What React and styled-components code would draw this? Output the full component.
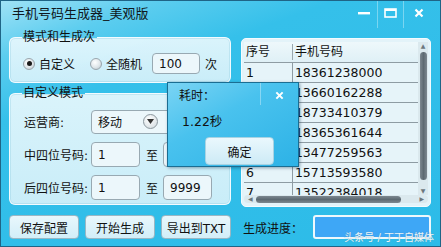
import React from "react";
import styled, { createGlobalStyle } from "styled-components";

const GlobalStyle = createGlobalStyle`
  html, body {
    margin: 0;
    padding: 0;
    background: #ffffff;
  }
  * {
    box-sizing: border-box;
  }
`;

const FONT = `"DejaVu Sans", "Noto Sans CJK SC", sans-serif`;

const Window = styled.div`
  position: relative;
  width: 441px;
  height: 247px;
  border: 1px solid #1f6486;
  background: linear-gradient(160deg, #9fe2f6 0%, #5ccdef 14%, #35c0ea 30%, #2cbbe8 100%);
  font-family: ${FONT};
  font-size: 12px;
  color: #111;
  overflow: hidden;
`;

const TitleBar = styled.div`
  display: flex;
  align-items: flex-start;
  height: 29px;
`;

const Title = styled.div`
  flex: 1;
  padding: 5px 0 0 11px;
  font-size: 13px;
  line-height: 16px;
  color: #101820;
`;

const Controls = styled.div`
  display: flex;
  height: 27px;
  margin-right: 7px;
`;

const ControlButton = styled.div`
  width: ${(p) => p.$w}px;
  height: 27px;
  display: flex;
  align-items: center;
  justify-content: center;
  border-left: ${(p) => (p.$sep ? "1px solid rgba(255,255,255,0.35)" : "none")};
  color: #ffffff;
  padding-bottom: 4px;
`;

const Main = styled.div`
  display: flex;
  gap: 10px;
  height: 179px;
  padding: 0 9px 0 8px;
`;

const LeftColumn = styled.div`
  width: 223px;
  display: flex;
  flex-direction: column;
  gap: 3px;
`;

const Group = styled.fieldset`
  margin: 0;
  padding: ${(p) => p.$pad};
  border: 1px solid #f3fbff;
  border-radius: 6px;
  background: linear-gradient(180deg, rgba(232, 248, 253, 0.92), rgba(214, 241, 250, 0.92));
  box-shadow: inset 0 0 0 1px rgba(120, 190, 215, 0.25);
`;

const Legend = styled.legend`
  padding: 0 2px 0 1px;
  margin-left: 4px;
  font-size: 12px;
  line-height: 14px;
  color: #111;
`;

const RadioRow = styled.div`
  display: flex;
  align-items: center;
  height: 21px;
  padding-left: 5px;
`;

const Radio = styled.span`
  display: inline-flex;
  align-items: center;
  justify-content: center;
  width: 12px;
  height: 12px;
  border-radius: 50%;
  border: 1px solid #9aa6ad;
  background: radial-gradient(circle at 40% 35%, #ffffff 0%, #dfe6ea 55%, #b5c0c6 100%);
  margin-right: 4px;
`;

const RadioDot = styled.span`
  width: 5px;
  height: 5px;
  border-radius: 50%;
  background: #1a1a1a;
`;

const RadioLabel = styled.span`
  margin-right: ${(p) => p.$mr}px;
  font-size: 12px;
`;

const Input = styled.div`
  display: flex;
  align-items: center;
  width: ${(p) => p.$w}px;
  height: ${(p) => p.$h || 24}px;
  padding-left: 6px;
  border: 1px solid #98a9b2;
  border-radius: 4px;
  background: #ecf7fb;
  font-size: 12px;
  color: #111;
`;

const Suffix = styled.span`
  margin-left: 5px;
  font-size: 12px;
`;

const FormRows = styled.div`
  display: flex;
  flex-direction: column;
  gap: 8px;
`;

const FormRow = styled.div`
  display: flex;
  align-items: center;
  height: 25px;
`;

const FieldLabel = styled.span`
  width: 73px;
  padding-left: 6px;
  font-size: 12px;
`;

const Select = styled.div`
  display: flex;
  align-items: center;
  justify-content: space-between;
  width: 80px;
  height: 24px;
  padding: 0 2px 0 6px;
  border: 1px solid #98a9b2;
  border-radius: 4px;
  background: #ecf7fb;
`;

const SelectArrow = styled.span`
  display: flex;
  align-items: center;
  justify-content: center;
  width: 15px;
  height: 15px;
  border-radius: 50%;
  border: 1px solid #8b979e;
  background: radial-gradient(circle at 40% 35%, #ffffff, #cfd8dd);
  margin-right: 10px;
`;

const ToText = styled.span`
  width: 23px;
  padding-left: 6px;
  font-size: 12px;
`;

const TableFrame = styled.div`
  margin-top: 8px;
  width: 191px;
  height: 169px;
  display: flex;
  flex-direction: column;
  padding: 3px 2px 3px 2px;
  border: 1px solid #f3fbff;
  border-radius: 5px;
  background: #e3f3f9;
`;

const TableBody = styled.div`
  display: flex;
  height: 153px;
`;

const Grid = styled.div`
  flex: 1;
  overflow: hidden;
`;

const HeaderRow = styled.div`
  display: grid;
  grid-template-columns: 48px 1fr;
  height: 20px;
  align-items: center;
  background: linear-gradient(180deg, #eef8fb, #dff0f6);
  font-size: 12px;
`;

const HeaderCell = styled.div`
  padding-left: 2px;
  border-left: ${(p) => (p.$sep ? "1px solid #9aa8ae" : "none")};
  height: 16px;
  line-height: 16px;
`;

const Row = styled.div`
  display: grid;
  grid-template-columns: 48px 1fr;
  height: 20px;
  border-top: 1px solid #8e9ca3;
  background: #e6f4f9;
  font-size: 12.5px;
`;

const Cell = styled.div`
  padding-left: 2px;
  line-height: 19px;
  border-left: ${(p) => (p.$sep ? "1px solid #8e9ca3" : "none")};
  white-space: nowrap;
`;

const VScroll = styled.div`
  width: 10px;
  display: flex;
  flex-direction: column;
  align-items: center;
  background: #dbe9ee;
`;

const VThumb = styled.div`
  width: 7px;
  height: 128px;
  border-radius: 4px;
  background: linear-gradient(90deg, #7c8890, #5d6a72, #7c8890);
  margin-top: 2px;
`;

const ScrollArrow = styled.div`
  font-size: 6px;
  line-height: 8px;
  color: #6c777d;
`;

const Spacer = styled.div`
  flex: 1;
`;

const HScroll = styled.div`
  display: flex;
  align-items: center;
  height: 9px;
  padding: 0 4px;
  background: #dbe9ee;
  border-radius: 4px;
`;

const HThumb = styled.div`
  height: 7px;
  width: 145px;
  border-radius: 4px;
  background: linear-gradient(180deg, #7c8890, #5d6a72, #7c8890);
  margin: 0 3px;
`;

const Footer = styled.div`
  display: flex;
  align-items: center;
  gap: 6px;
  padding: 6px 0 0 8px;
`;

const Button = styled.div`
  display: flex;
  align-items: center;
  justify-content: center;
  width: 70px;
  height: 24px;
  border: 1px solid #9ab7c4;
  border-radius: 4px;
  background: linear-gradient(180deg, #e9f7fc 0%, #d2eef8 100%);
  font-size: 12px;
  color: #111;
`;

const ProgressLabel = styled.span`
  margin-left: 6px;
  width: 64px;
  font-size: 12px;
`;

const Progress = styled.div`
  width: 118px;
  height: 24px;
  border: 2px solid #eef8fc;
  border-radius: 3px;
  background: #3ea7f6;
`;

const Dialog = styled.div`
  position: absolute;
  left: 166px;
  top: 81px;
  width: 132px;
  height: 85px;
  border: 1px solid #1b6d92;
  background: linear-gradient(150deg, #7ad4f4 0%, #49c2ee 40%, #2db2e6 100%);
  box-shadow: 1px 1px 3px rgba(0, 40, 70, 0.4);
  display: flex;
  flex-direction: column;
`;

const DialogHead = styled.div`
  display: flex;
  height: 22px;
`;

const DialogTitle = styled.div`
  flex: 1;
  padding: 6px 0 0 11px;
  font-size: 12px;
  line-height: 14px;
`;

const DialogClose = styled.div`
  width: 38px;
  display: flex;
  align-items: center;
  justify-content: center;
  border-left: 1px solid rgba(255, 255, 255, 0.35);
  color: #ffffff;
  padding-top: 3px;
`;

const DialogText = styled.div`
  padding: 10px 0 0 14px;
  font-size: 12.5px;
  line-height: 14px;
`;

const DialogButton = styled.div`
  align-self: flex-end;
  margin: 8px 24px 0 0;
  width: 69px;
  height: 28px;
  display: flex;
  align-items: center;
  justify-content: center;
  border: 1px solid #a8d3e3;
  border-radius: 4px;
  background: linear-gradient(180deg, #eaf8fd, #cdebf6);
  font-size: 12px;
`;

const Watermark = styled.div`
  position: absolute;
  right: 6px;
  bottom: 2px;
  font-size: 10px;
  line-height: 12px;
  color: #ffffff;
  text-shadow: 0 0 1px #5a8fa6;
  opacity: 0.9;
`;

const numbers = [
  "18361238000",
  "13660162288",
  "18733410379",
  "18365361644",
  "13477259563",
  "15713593580",
  "13522384018",
];

const XIcon = ({ size = 9 }) => (
  <svg width={size} height={size} viewBox="0 0 10 10">
    <path d="M1.5 1.5 L8.5 8.5 M8.5 1.5 L1.5 8.5" stroke="#fff" strokeWidth="2.2" />
  </svg>
);

export default function App() {
  return (
    <>
      <GlobalStyle />
      <Window>
        <TitleBar>
          <Title>手机号码生成器_美观版</Title>
          <Controls>
            <ControlButton $w={26}>
              <svg width="12" height="4" viewBox="0 0 12 4">
                <rect x="0" y="1" width="12" height="2.4" fill="#fff" />
              </svg>
            </ControlButton>
            <ControlButton $w={26} $sep>
              <svg width="13" height="10" viewBox="0 0 13 10">
                <rect x="1" y="1" width="11" height="8" fill="none" stroke="#fff" strokeWidth="1.6" />
                <rect x="1" y="1" width="11" height="2" fill="#fff" />
              </svg>
            </ControlButton>
            <ControlButton $w={30} $sep>
              <XIcon size={10} />
            </ControlButton>
          </Controls>
        </TitleBar>

        <Main>
          <LeftColumn>
            <Group $pad="9px 8px 8px 8px">
              <Legend>模式和生成次</Legend>
              <RadioRow>
                <Radio>
                  <RadioDot />
                </Radio>
                <RadioLabel $mr={15}>自定义</RadioLabel>
                <Radio />
                <RadioLabel $mr={10}>全随机</RadioLabel>
                <Input $w={48} $h={21}>100</Input>
                <Suffix>次</Suffix>
              </RadioRow>
            </Group>

            <Group $pad="9px 8px 4px 8px">
              <Legend>自定义模式</Legend>
              <FormRows>
                <FormRow>
                  <FieldLabel>运营商:</FieldLabel>
                  <Select>
                    <span>移动</span>
                    <SelectArrow>
                      <svg width="7" height="5" viewBox="0 0 7 5">
                        <path d="M0 0 L7 0 L3.5 5 Z" fill="#333" />
                      </svg>
                    </SelectArrow>
                  </Select>
                </FormRow>
                <FormRow>
                  <FieldLabel>中四位号码:</FieldLabel>
                  <Input $w={49} $h={25}>1</Input>
                  <ToText>至</ToText>
                  <Input $w={49} $h={25}>9999</Input>
                </FormRow>
                <FormRow>
                  <FieldLabel>后四位号码:</FieldLabel>
                  <Input $w={49} $h={25}>1</Input>
                  <ToText>至</ToText>
                  <Input $w={49} $h={25}>9999</Input>
                </FormRow>
              </FormRows>
            </Group>
          </LeftColumn>

          <TableFrame>
            <TableBody>
              <Grid>
                <HeaderRow>
                  <HeaderCell>序号</HeaderCell>
                  <HeaderCell $sep>手机号码</HeaderCell>
                </HeaderRow>
                {numbers.map((n, i) => (
                  <Row key={n}>
                    <Cell>{i + 1}</Cell>
                    <Cell $sep>{n}</Cell>
                  </Row>
                ))}
              </Grid>
              <VScroll>
                <ScrollArrow>▲</ScrollArrow>
                <VThumb />
                <Spacer />
                <ScrollArrow>▼</ScrollArrow>
              </VScroll>
            </TableBody>
            <HScroll>
              <ScrollArrow>◀</ScrollArrow>
              <HThumb />
              <Spacer />
              <ScrollArrow>▶</ScrollArrow>
            </HScroll>
          </TableFrame>
        </Main>

        <Footer>
          <Button>保存配置</Button>
          <Button>开始生成</Button>
          <Button>导出到TXT</Button>
          <ProgressLabel>生成进度：</ProgressLabel>
          <Progress />
        </Footer>

        <Dialog>
          <DialogHead>
            <DialogTitle>耗时：</DialogTitle>
            <DialogClose>
              <XIcon size={9} />
            </DialogClose>
          </DialogHead>
          <DialogText>1.22秒</DialogText>
          <DialogButton>确定</DialogButton>
        </Dialog>

        <Watermark>头条号 / 丁丁自媒体</Watermark>
      </Window>
    </>
  );
}
